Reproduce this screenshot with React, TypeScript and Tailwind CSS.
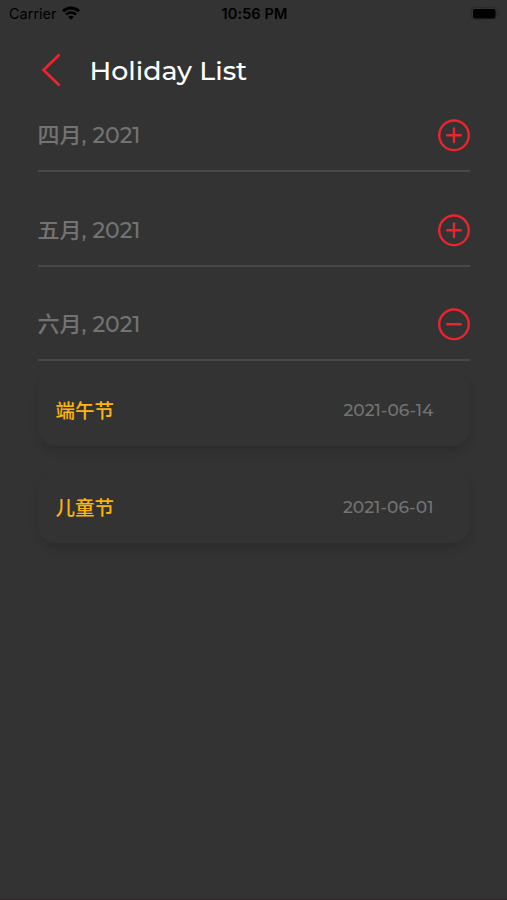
import { useState } from 'react';

type Holiday = { name: string; date: string };
type Month = { label: string; year: string; holidays: Holiday[] };

const months: Month[] = [
	{ label: '四月', year: '2021', holidays: [] },
	{ label: '五月', year: '2021', holidays: [] },
	{
		label: '六月',
		year: '2021',
		holidays: [
			{ name: '端午节', date: '2021-06-14' },
			{ name: '儿童节', date: '2021-06-01' },
		],
	},
];

function StatusBar() {
	return (
		<div className="grid h-7 grid-cols-3 items-center pl-[9px] pr-[7px] font-['Inter',sans-serif] text-black">
			<div className="flex items-center gap-[5px]">
				<span className="text-[14.5px] leading-7">Carrier</span>
				<svg className="-mt-[2px]" width="18" height="14" viewBox="0 0 18 14" fill="none" stroke="currentColor">
					<path d="M1 5.2a11.5 11.5 0 0 1 16 0" strokeWidth="2.9" />
					<path d="M4 8.5a7.2 7.2 0 0 1 10 0" strokeWidth="2.6" />
					<path d="M9 13.8 6.2 11a4.3 4.3 0 0 1 5.6 0z" fill="currentColor" stroke="none" />
				</svg>
			</div>
			<span className="text-center text-[14.5px] font-semibold tracking-[0.1px]">10:56 PM</span>
			<svg className="justify-self-end" width="29" height="14" viewBox="0 0 29 14">
				<rect x="0.5" y="0.5" width="25" height="12" rx="3.5" fill="none" stroke="#2b2b2b" />
				<rect x="2" y="2" width="22.5" height="9.5" rx="2" fill="#000" />
				<path d="M27 4.5v4.5c2-.8 2-3.7 0-4.5z" fill="#2b2b2b" />
			</svg>
		</div>
	);
}

function ToggleIcon({ open }: { open: boolean }) {
	return (
		<svg width="32" height="33" viewBox="0 0 32 33" fill="none" stroke="#ec2430" strokeWidth="2.4">
			<circle cx="16" cy="16.3" r="14.8" />
			<path d="M9.2 16.3h13.6" strokeLinecap="round" />
			{!open && <path d="M16 9.5v13.6" strokeLinecap="round" />}
		</svg>
	);
}

function HolidayCard({ holiday }: { holiday: Holiday }) {
	return (
		<div className="flex h-[73px] items-center justify-between rounded-[18px] bg-[#333] pl-[18px] pr-[36px] shadow-[0_6px_9px_rgba(0,0,0,0.12)]">
			<span className="pt-1 text-[19.5px] font-medium text-[#fdb50c]">{holiday.name}</span>
			<span className="pt-[2px] text-[17px] font-medium tracking-[0.05px] text-[#737373]">{holiday.date}</span>
		</div>
	);
}

export default function App() {
	const [openMonth, setOpenMonth] = useState('六月');

	return (
		<div className="h-[900px] overflow-hidden border-b border-[#33272b] bg-[#333] font-['Montserrat','Inter','Noto_Sans_CJK_SC',sans-serif]">
			<StatusBar />
			<header className="flex h-[84px] items-center gap-[28.5px] pl-[41px]">
				<svg width="20" height="34" viewBox="0 0 20 34" fill="none" stroke="#ec2430" strokeWidth="2.7">
					<path d="M18.5 1.5 2.5 17l16 15.5" />
				</svg>
				<h1 className="pt-[3px] text-[26.8px] font-medium text-white">Holiday List</h1>
			</header>
			<main className="px-[37.5px]">
				{months.map((month) => {
					const open = openMonth === month.label;
					return (
						<section key={month.label} className="mb-[34.5px]">
							<button
								className="flex h-[60px] w-full items-start justify-between border-b-2 border-[#484848] pt-[7px]"
								onClick={() => setOpenMonth(open ? '' : month.label)}
							>
								<span className="text-[22px] font-medium leading-[33px] text-[#737373]">
									{month.label}, {month.year}
								</span>
								<ToggleIcon open={open} />
							</button>
							{open && (
								<div className="flex flex-col gap-6 pt-3">
									{month.holidays.map((holiday) => (
										<HolidayCard key={holiday.date} holiday={holiday} />
									))}
								</div>
							)}
						</section>
					);
				})}
			</main>
		</div>
	);
}
